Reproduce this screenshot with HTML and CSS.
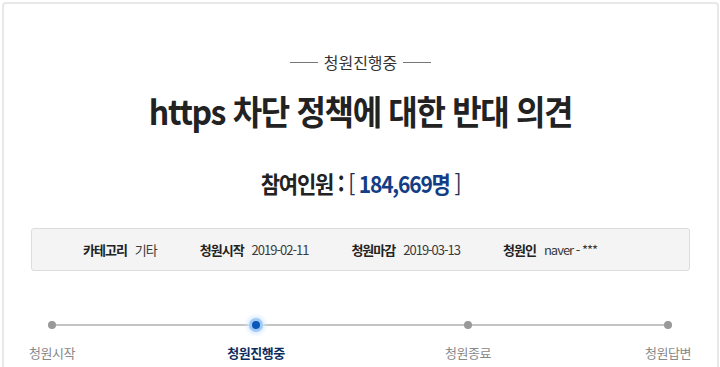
FILE: index.html
```html
<!DOCTYPE html>
<html lang="ko">
<head>
<meta charset="utf-8">
<title>청원</title>
<link rel="stylesheet" href="styles.css">
</head>
<body>
<div class="petition">
  <div class="status"><span class="dash"></span><span class="status-text">청원진행중</span><span class="dash"></span></div>
  <h1 class="title">https 차단 정책에 대한 반대 의견</h1>
  <div class="count">참여인원 : <span class="num"><span class="br">[</span> 184,669명 <span class="br">]</span></span></div>
  <div class="info">
    <div class="item"><span class="label">카테고리</span><span class="value">기타</span></div>
    <div class="item"><span class="label">청원시작</span><span class="value">2019-02-11</span></div>
    <div class="item"><span class="label">청원마감</span><span class="value">2019-03-13</span></div>
    <div class="item"><span class="label">청원인</span><span class="value">naver - ***</span></div>
  </div>
  <div class="timeline">
    <div class="step s1"><span class="dot"></span><span class="step-label">청원시작</span></div>
    <div class="step s2 active"><span class="dot"></span><span class="step-label">청원진행중</span></div>
    <div class="step s3"><span class="dot"></span><span class="step-label">청원종료</span></div>
    <div class="step s4"><span class="dot"></span><span class="step-label">청원답변</span></div>
  </div>
</div>
</body>
</html>
```
FILE: styles.css
```css
html, body {
  margin: 0;
  padding: 0;
  background: #fff;
}
body {
  font-family: "Noto Sans CJK KR", "Noto Sans", sans-serif;
  color: #222;
  overflow: hidden;
}
.petition {
  margin: 2px 1px 0 2px;
  border: 2px solid #e8e8e8;
  border-bottom: none;
  border-radius: 4px 4px 0 0;
  padding-top: 48px;
  height: 400px;
  box-sizing: border-box;
}
.status {
  display: flex;
  justify-content: center;
  align-items: center;
  gap: 6px;
  height: 20px;
  line-height: 20px;
  font-size: 16px;
  color: #333;
}
.dash {
  display: block;
  width: 28px;
  height: 1px;
  background: #777;
}
.title {
  margin: 18px 0 0;
  text-align: center;
  font-size: 32px;
  line-height: 40px;
  font-weight: 700;
  letter-spacing: -1.35px;
  color: #222;
  transform: scaleY(1.08);
}
.count {
  margin-top: 38px;
  text-align: center;
  font-size: 21px;
  line-height: 30px;
  font-weight: 700;
  letter-spacing: -1.2px;
  color: #222;
  transform: scaleY(1.1);
}
.num {
  color: #133d85;
}
.br {
  font-weight: 400;
  color: #1d2f55;
}
.info {
  margin: 30px 27px 0;
  height: 43px;
  box-sizing: border-box;
  border: 1px solid #dcdcdc;
  border-radius: 3px;
  background: #f4f4f4;
  display: flex;
  align-items: center;
  padding-left: 51px;
  gap: 43px;
  font-size: 13px;
}
.item {
  display: flex;
  gap: 8px;
}
.label {
  font-weight: 700;
  color: #222;
  letter-spacing: -1px;
}
.value {
  color: #3a3a3a;
  letter-spacing: -1px;
}
.timeline {
  position: relative;
  margin-top: 46px;
  display: grid;
  grid-template-columns: 90px 114px 90px 122px 90px 110px 90px;
  padding-left: 3px;
}
.timeline::before {
  content: "";
  position: absolute;
  left: 48px;
  width: 616px;
  top: 7px;
  height: 2px;
  background: #c4c4c4;
}
.step {
  display: flex;
  flex-direction: column;
  align-items: center;
  position: relative;
}
.s1 { grid-column: 1; }
.s2 { grid-column: 3; }
.s3 { grid-column: 5; }
.s4 { grid-column: 7; }
.dot {
  display: block;
  width: 8px;
  height: 8px;
  margin-top: 4px;
  border-radius: 50%;
  background: #999;
}
.active .dot {
  background: #0a58b8;
  box-shadow: 0 0 0 3px #9fcaf5, 0 0 4px 5px #d6e9fc;
}
.step-label {
  margin-top: 14px;
  font-size: 13px;
  line-height: 20px;
  color: #888;
  letter-spacing: -0.5px;
  white-space: nowrap;
}
.active .step-label {
  color: #0d2c5e;
  font-weight: 700;
}
```
